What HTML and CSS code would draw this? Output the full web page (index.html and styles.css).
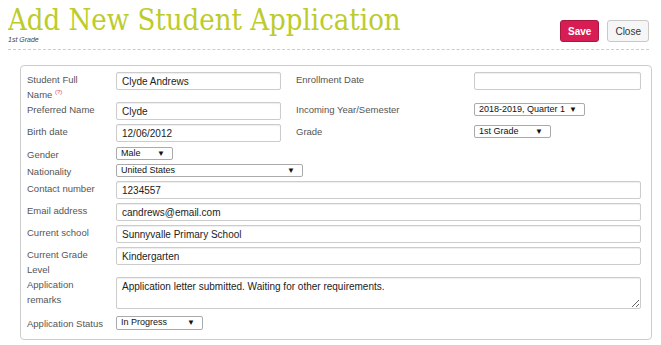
FILE: index.html
```html
<!DOCTYPE html>
<html lang="en">
<head>
    <meta charset="UTF-8">
    <meta name="viewport" content="width=device-width, initial-scale=1.0">
    <title>Add New Student Application</title>
    <link rel="stylesheet" href="styles.css">
</head>
<body>
    <div class="page-header">
        <div class="title-block">
            <h1>Add New Student Application</h1>
            <div class="subtitle">1st Grade</div>
        </div>
        <div class="actions">
            <button class="btn btn-save">Save</button>
            <button class="btn btn-close">Close</button>
        </div>
    </div>

    <div class="panel">
        <div class="form-grid">
            <label class="lbl">Student Full<br>Name <sup class="help">(?)</sup></label>
            <div class="field"><input type="text" class="inp inp-half" value="Clyde Andrews"></div>
            <label class="lbl">Enrollment Date</label>
            <div class="field"><input type="text" class="inp" value=""></div>

            <label class="lbl">Preferred Name</label>
            <div class="field"><input type="text" class="inp inp-half" value="Clyde"></div>
            <label class="lbl">Incoming Year/Semester</label>
            <div class="field"><div class="sel sel-offset" style="width: 111px;"><span>2018-2019, Quarter 1</span><span class="arrow">&#9660;</span></div></div>

            <label class="lbl">Birth date</label>
            <div class="field field-tall"><input type="text" class="inp inp-half" value="12/06/2012"></div>
            <label class="lbl">Grade</label>
            <div class="field"><div class="sel sel-offset" style="width: 77px;"><span>1st Grade</span><span class="arrow">&#9660;</span></div></div>

            <label class="lbl">Gender</label>
            <div class="field field-wide"><div class="sel" style="width: 57px;"><span>Male</span><span class="arrow">&#9660;</span></div></div>

            <label class="lbl">Nationality</label>
            <div class="field field-wide"><div class="sel" style="width: 187px;"><span>United States</span><span class="arrow">&#9660;</span></div></div>

            <label class="lbl">Contact number</label>
            <div class="field field-wide"><input type="text" class="inp" value="1234557"></div>

            <label class="lbl">Email address</label>
            <div class="field field-wide"><input type="text" class="inp" value="candrews@email.com"></div>

            <label class="lbl">Current school</label>
            <div class="field field-wide"><input type="text" class="inp" value="Sunnyvalle Primary School"></div>

            <label class="lbl">Current Grade Level</label>
            <div class="field field-wide"><input type="text" class="inp" value="Kindergarten"></div>

            <label class="lbl">Application remarks</label>
            <div class="field field-wide field-area"><textarea class="inp area">Application letter submitted. Waiting for other requirements.</textarea></div>

            <label class="lbl">Application Status</label>
            <div class="field field-wide"><div class="sel sel-status" style="width: 87px;"><span>In Progress</span><span class="arrow">&#9660;</span></div></div>
        </div>
    </div>
</body>
</html>
```

FILE: styles.css
```css
body {
    margin: 8px;
    font-family: 'Liberation Sans', Arial, sans-serif;
    background-color: #fff;
    color: #333;
}
.page-header {
    display: flex;
    justify-content: space-between;
    align-items: flex-end;
    width: 641px;
    border-bottom: 1px dashed #ccc;
    padding-bottom: 5px;
}
h1 {
    font-family: 'DejaVu Serif', serif;
    font-stretch: condensed;
    font-weight: 400;
    font-size: 29px;
    line-height: 29px;
    color: #bccc2a;
    margin: -2px 0 0;
}
.subtitle {
    font-size: 7px;
    line-height: 9px;
    font-style: italic;
    color: #444;
}
.actions {
    display: flex;
    gap: 8px;
    margin-bottom: 2px;
}
.btn {
    font-family: 'Liberation Sans', Arial, sans-serif;
    font-size: 10px;
    height: 22px;
    padding: 0 7px;
    border-radius: 3px;
    cursor: pointer;
}
.btn-save {
    background-color: #d81d55;
    border: 1px solid #a8183f;
    color: #fff;
    font-weight: 700;
}
.btn-close {
    background-color: #f6f6f6;
    border: 1px solid #c8c8c8;
    color: #333;
}
.panel {
    margin: 15px 1px 0 12px;
    border: 1px solid #ccc;
    border-radius: 4px;
}
.form-grid {
    display: grid;
    grid-template-columns: 89px 180px 178px 1fr;
    padding: 6px 10px 5px 6px;
}
.lbl {
    font-size: 9.5px;
    line-height: 15px;
    color: #555;
    padding-right: 10px;
}
.help {
    color: #e0406a;
    font-size: 6px;
    line-height: 0;
    vertical-align: 4px;
}
.field {
    padding-bottom: 4px;
}
.field-tall {
    padding-bottom: 5px;
}
.field-wide {
    grid-column: 2 / -1;
}
.field-area {
    padding-bottom: 7px;
}
.inp {
    display: block;
    box-sizing: border-box;
    width: 100%;
    height: 18px;
    border: 1px solid #ccc;
    border-radius: 2px;
    box-shadow: inset 0 1px 1px rgba(0, 0, 0, 0.07);
    padding: 0 5px;
    font-family: 'Liberation Sans', Arial, sans-serif;
    font-size: 10px;
    color: #222;
    margin: 0;
}
.inp-half {
    width: 165px;
}
.area {
    height: 32px;
    padding: 3px 5px;
    resize: vertical;
}
.sel {
    box-sizing: border-box;
    display: flex;
    justify-content: space-between;
    align-items: flex-start;
    height: 13px;
    border: 1px solid #aaa;
    border-radius: 2px;
    padding: 0 7px 0 4px;
    font-size: 9px;
    line-height: 10px;
    color: #111;
    background-color: #fff;
}
.sel-offset {
    margin-top: 1px;
}
.sel-status {
    height: 14px;
}
.arrow {
    font-size: 8px;
    line-height: 11px;
}
```
